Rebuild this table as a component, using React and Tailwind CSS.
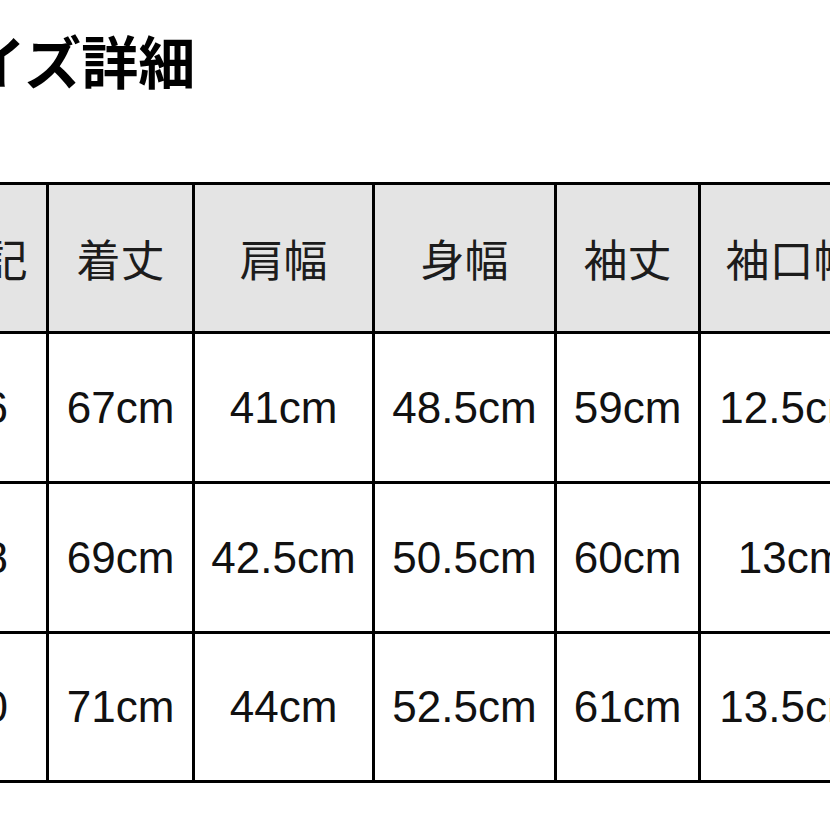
import React from 'react';

const headers = ['表記', '着丈', '肩幅', '身幅', '袖丈', '袖口幅'];

const rows = [
    ['36', '67cm', '41cm', '48.5cm', '59cm', '12.5cm'],
    ['38', '69cm', '42.5cm', '50.5cm', '60cm', '13cm'],
    ['40', '71cm', '44cm', '52.5cm', '61cm', '13.5cm'],
];

const App = () => {
    return (
        <div className="w-[830px] h-[830px] overflow-hidden bg-white">
            <div className="ml-[-82px] w-[970px]">
                <h1
                    className="ml-[-6px] pt-[31px] text-[57px] leading-[57px] font-bold text-black"
                    style={{ fontFamily: '"Noto Sans CJK JP", sans-serif' }}
                >
                    サイズ詳細
                </h1>

                <div className="mt-[94px] grid grid-cols-[125px_143px_177px_179px_141px_181px] grid-rows-[146px_147px_147px_146px] gap-[3px] p-[3px] bg-black w-max">
                    {headers.map(h => (
                        <div
                            key={h}
                            className="bg-[#e4e4e4] flex items-center justify-center text-[44px] text-[#1c1c1c] whitespace-nowrap overflow-hidden"
                            style={{ fontFamily: '"Noto Sans CJK JP", sans-serif' }}
                        >
                            {h}
                        </div>
                    ))}
                    {rows.map(row =>
                        row.map((cell, i) => (
                            <div
                                key={row[0] + '-' + i}
                                className="bg-white flex items-center justify-center text-[44px] text-[#111] whitespace-nowrap overflow-hidden"
                                style={{ fontFamily: '"Liberation Sans", Arial, sans-serif' }}
                            >
                                {cell}
                            </div>
                        ))
                    )}
                </div>
            </div>
        </div>
    );
};

export default App;
